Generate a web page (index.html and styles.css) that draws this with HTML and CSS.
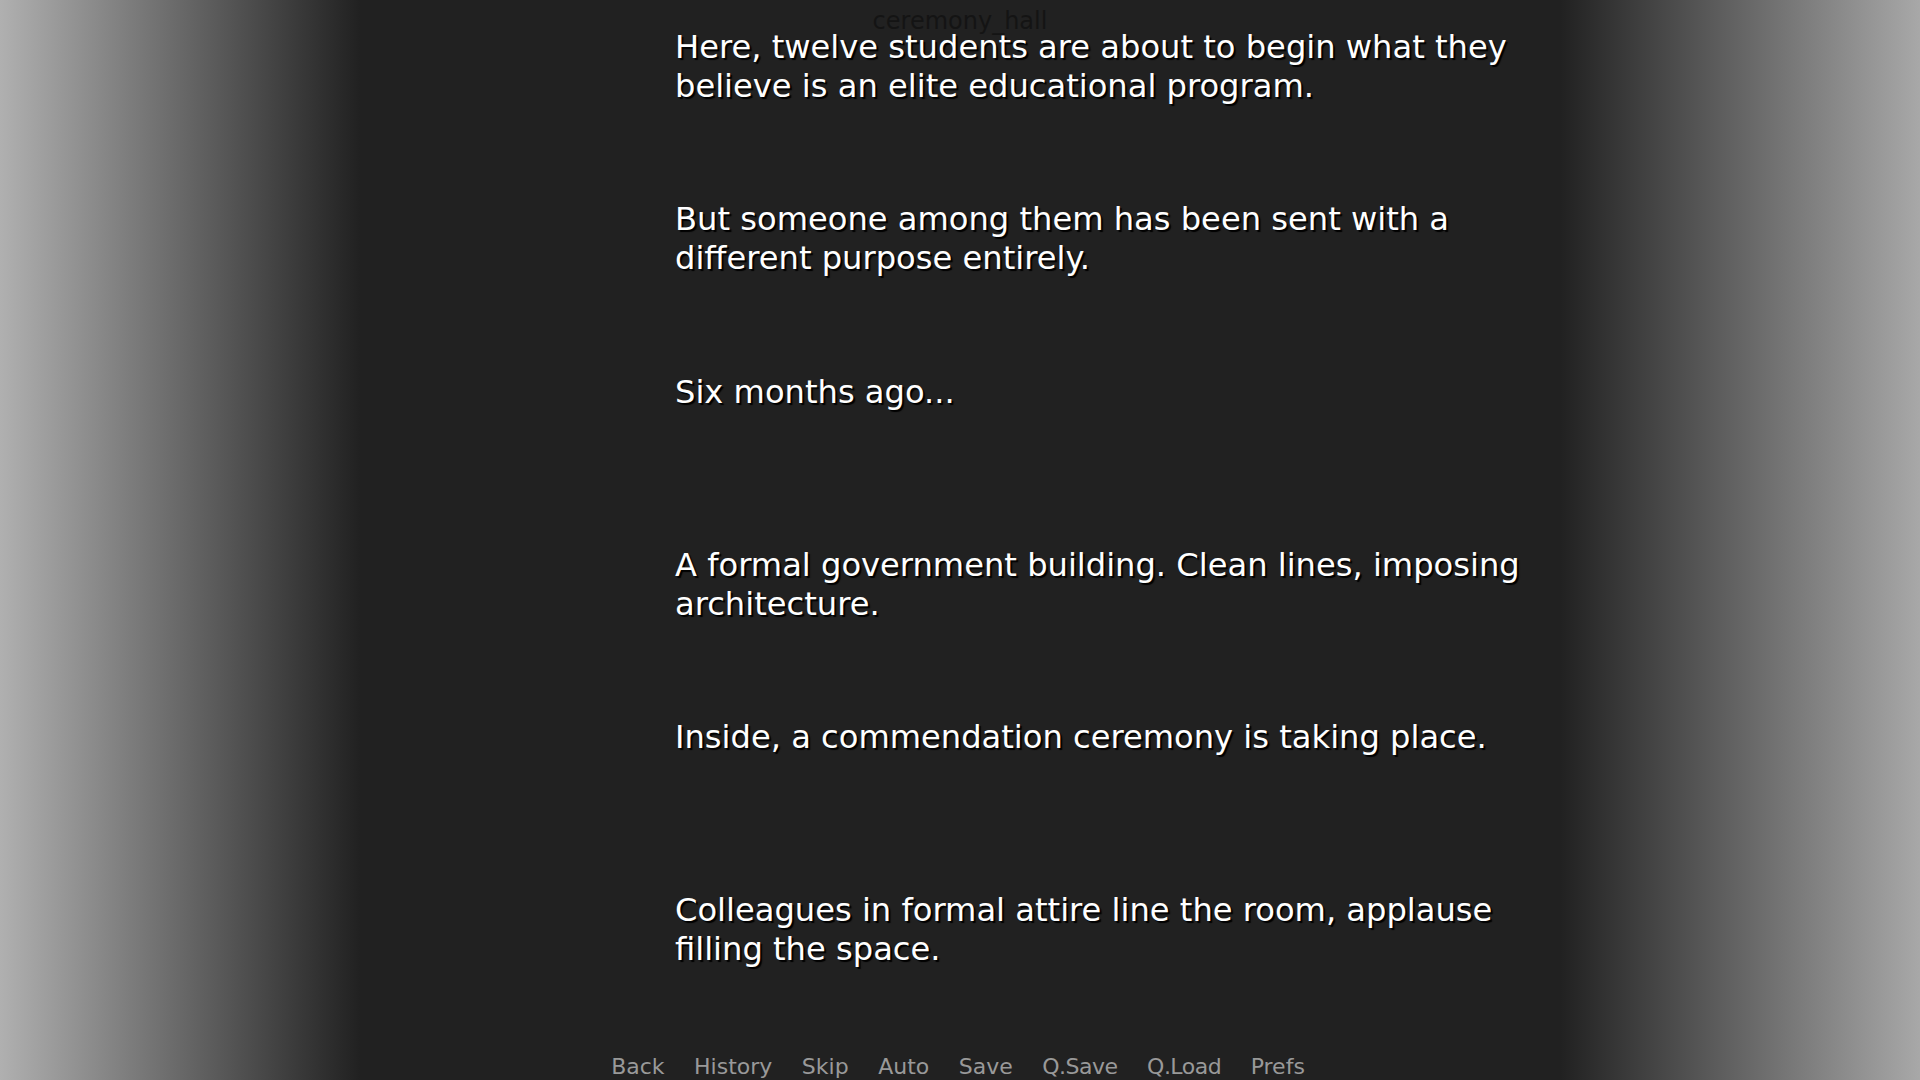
FILE: index.html
```html
<!DOCTYPE html>
<html lang="en">
<head>
<meta charset="utf-8">
<title>ceremony_hall</title>
<link rel="stylesheet" href="styles.css">
</head>
<body>
<div class="screen">
  <div class="side side-left"></div>
  <main class="stage">
    <div class="scene-label">ceremony_hall</div>
    <div class="nvl">
      <p class="entry">Here, twelve students are about to begin what they believe is an elite educational program.</p>
      <p class="entry">But someone among them has been sent with a different purpose entirely.</p>
      <p class="entry">Six months ago...</p>
      <p class="entry">A formal government building. Clean lines, imposing architecture.</p>
      <p class="entry">Inside, a commendation ceremony is taking place.</p>
      <p class="entry">Colleagues in formal attire line the room, applause filling the space.</p>
    </div>
    <nav class="quick-menu">
      <span class="qbtn">Back</span>
      <span class="qbtn">History</span>
      <span class="qbtn">Skip</span>
      <span class="qbtn">Auto</span>
      <span class="qbtn">Save</span>
      <span class="qbtn qbtn-quick">Q.Save</span>
      <span class="qbtn qbtn-quick">Q.Load</span>
      <span class="qbtn">Prefs</span>
    </nav>
  </main>
  <div class="side side-right"></div>
</div>
</body>
</html>
```
FILE: styles.css
```css
html, body {
  margin: 0;
  padding: 0;
  width: 1920px;
  height: 1080px;
  overflow: hidden;
  background: #212121;
  font-family: "DejaVu Sans", "Liberation Sans", sans-serif;
}

.screen {
  display: grid;
  grid-template-columns: 360px 1200px 360px;
  height: 1080px;
}

.side-left {
  background: linear-gradient(to right, #b0b0b0, #212121);
}

.side-right {
  background: linear-gradient(to right, #212121, #a8a8a8);
}

.stage {
  position: relative;
  background: #212121;
  height: 1080px;
}

.scene-label {
  position: absolute;
  top: 7px;
  left: 0;
  right: 0;
  text-align: center;
  font-size: 24px;
  line-height: 28px;
  color: #141414;
}

.nvl {
  padding-top: 27.5px;
  padding-left: 315px;
  width: 885px;
}

.entry {
  margin: 0;
  height: 172.7px;
  font-size: 32.15px;
  line-height: 39px;
  color: #ffffff;
  text-shadow: 2px 2px 1px #000000;
}

.quick-menu {
  position: absolute;
  left: 0;
  right: 0;
  bottom: 0;
  padding-right: 4px;
  display: flex;
  justify-content: center;
  gap: 29.5px;
  font-size: 22px;
  line-height: 26px;
  color: #999999;
}

.qbtn-quick {
  letter-spacing: -0.5px;
}
```
